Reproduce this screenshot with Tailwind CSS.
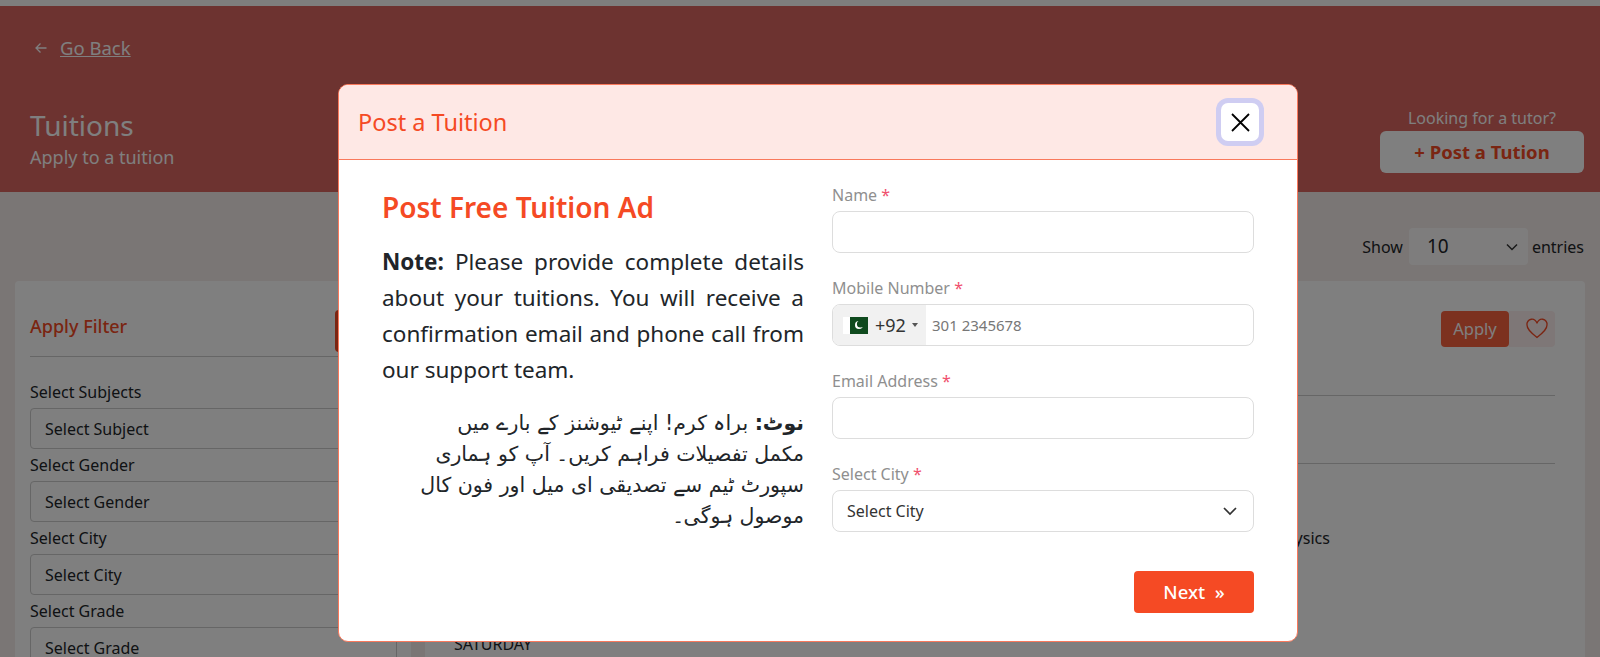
<!DOCTYPE html>
<html lang="en">
<head>
  <meta charset="UTF-8" />
  <title>Tuitions</title>
  <script src="https://cdn.jsdelivr.net/npm/@tailwindcss/browser@4"></script>
</head>
<body class="h-[657px] overflow-hidden bg-[#f5ecea] font-['Noto_Sans',sans-serif] text-[#212529]">
  <!-- page behind the modal -->
  <div class="h-[657px] overflow-hidden">
    <div class="h-[6px] bg-[#fdfcfa]"></div>
    <header class="relative h-[186px] bg-[#da6660] px-[30px] text-white">
      <div class="flex items-center gap-[13px] pt-[30px] text-[18.5px] leading-[24px]">
        <svg class="ml-[5px] h-[12px] w-[12px]" viewBox="0 0 12 12" fill="none" stroke="#fff" stroke-width="1.3"><path d="M11.5 6H1M5.5 1.5L1 6l4.5 4.5"/></svg>
        <a class="underline">Go Back</a>
      </div>
      <h1 class="mt-[47px] text-[28px] leading-[36px]">Tuitions</h1>
      <p class="mt-[2px] text-[18px] leading-[24px]">Apply to a tuition</p>
      <div class="absolute right-[16px] top-[100px] w-[204px] text-center">
        <p class="text-[16px] leading-[24px]">Looking for a tutor?</p>
        <button class="mt-[1px] h-[42px] w-full rounded-md bg-white text-[18.5px] font-bold text-[#f54a24]">+ Post a Tution</button>
      </div>
    </header>
    <div class="flex h-[89px] items-center justify-end gap-[4px] pt-[20px] pr-[16px] text-[16px]">
      <span class="mr-[2px]">Show</span>
      <div class="flex h-[37px] w-[119px] items-center justify-between rounded bg-[#fcfbfb] pl-[18px] pr-2 text-[19px]">
        10
        <svg class="h-4 w-4" viewBox="0 0 16 16" fill="none" stroke="#333" stroke-width="1.5"><path d="M3 5.5l5 5 5-5"/></svg>
      </div>
      <span>entries</span>
    </div>
    <div class="flex gap-[14px] px-[15px]">
      <aside class="w-[396px] shrink-0 rounded-t bg-white pl-[15px] pr-[14px]">
        <div class="flex h-[76px] items-end justify-between border-b border-[#ccc] pb-[4px]">
          <h3 class="mb-[14px] text-[18px] font-medium leading-[24px] text-[#f54a24]">Apply Filter</h3>
          <span class="h-[42px] w-[62px] rounded bg-[#f54a24]"></span>
        </div>
        <div class="pt-[24px] text-[16px]">
          <label class="block leading-[22px]">Select Subjects</label>
          <div class="mt-[5px] flex h-[41px] items-center rounded border border-[#ccc] px-[14px]">Select Subject</div>
          <label class="mt-[5px] block leading-[22px]">Select Gender</label>
          <div class="mt-[5px] flex h-[41px] items-center rounded border border-[#ccc] px-[14px]">Select Gender</div>
          <label class="mt-[5px] block leading-[22px]">Select City</label>
          <div class="mt-[5px] flex h-[41px] items-center rounded border border-[#ccc] px-[14px]">Select City</div>
          <label class="mt-[5px] block leading-[22px]">Select Grade</label>
          <div class="mt-[5px] flex h-[41px] items-center rounded border border-[#ccc] px-[14px]">Select Grade</div>
        </div>
      </aside>
      <main class="flex-1 rounded-t bg-white pl-[29px] pr-[30px]">
        <div class="flex h-[115px] items-start justify-end border-b border-[#ccc] pt-[30px]">
          <button class="h-[36px] w-[68px] rounded bg-[#f9623e] text-[16.5px] text-white">Apply</button>
          <span class="flex h-[36px] w-[46px] items-center justify-center rounded-r bg-[#fdeeee] pl-[9px]">
            <svg class="h-[24px] w-[24px]" viewBox="0 0 24 24" fill="none" stroke="#f54a24" stroke-width="1.3"><path d="M12 20.5C5 15 2 12 2 8a5 5 0 0 1 10-1.5A5 5 0 0 1 22 8c0 4-3 7-10 12.5z"/></svg>
          </span>
        </div>
        <div class="mt-[67px] border-t border-[#ccc]"></div>
        <p class="ml-[821px] mt-[62px] text-[16px] leading-[24px]">Physics</p>
        <p class="mt-[82px] text-[16px] leading-[24px]">SATURDAY</p>
      </main>
    </div>
  </div>

  <!-- overlay -->
  <div class="absolute inset-0 bg-black/50"></div>

  <!-- modal -->
  <div class="absolute left-[338px] top-[84px] flex h-[558px] w-[960px] flex-col overflow-hidden rounded-[10px] border border-[#f9795c] bg-white">
    <div class="flex h-[75px] shrink-0 items-center justify-between border-b border-[#f9795c] bg-[#fee8e5] pl-[19px] pr-[38px]">
      <h2 class="pt-[2px] text-[23.5px] text-[#f54a24]">Post a Tuition</h2>
      <button class="flex h-[38px] w-[38px] items-center justify-center rounded-[7px] bg-white ring-[5px] ring-[#cfcdf2]">
        <svg class="h-[19px] w-[19px]" viewBox="0 0 19 19" fill="none" stroke="#000" stroke-width="1.8"><path d="M1 1l17 17M18 1L1 18"/></svg>
      </button>
    </div>
    <div class="flex flex-1 pl-[43px] pr-[43px]">
      <div class="w-[422px] shrink-0 pt-[29px]">
        <h3 class="text-[28px] font-semibold leading-[36px] text-[#f54a24]">Post Free Tuition Ad</h3>
        <p class="mt-[19px] text-justify text-[22.5px] leading-[36px] text-[#212529]"><b>Note:</b> Please provide complete details about your tuitions. You will receive a confirmation email and phone call from our support team.</p>
        <p dir="rtl" class="mt-[20px] pl-[30px] text-[20.5px] leading-[31px] text-[#212529] font-['DejaVu_Sans',sans-serif]"><b>نوٹ:</b> براہ کرم! اپنے ٹیوشنز کے بارے میں مکمل تفصیلات فراہم کریں۔ آپ کو ہماری سپورٹ ٹیم سے تصدیقی ای میل اور فون کال موصول ہوگی۔</p>
      </div>
      <div class="ml-[28px] flex-1 pt-[23px] text-[16px]">
        <label class="block leading-[24px] text-[#8f8f8f]">Name <span class="text-[#f0506e]">*</span></label>
        <div class="mt-[4px] h-[42px] rounded-lg border border-[#ddd]"></div>
        <label class="mt-[23px] block leading-[24px] text-[#8f8f8f]">Mobile Number <span class="text-[#f0506e]">*</span></label>
        <div class="mt-[4px] flex h-[42px] items-center overflow-hidden rounded-lg border border-[#ddd]">
          <div class="flex h-full w-[93px] items-center bg-[#f1f1f1] pl-[10px]">
            <svg class="h-[17px] w-[25px]" viewBox="0 0 25 17"><rect width="25" height="17" fill="#fff"/><rect x="7" width="18" height="17" fill="#0f4a1e"/><circle cx="16" cy="8" r="4" fill="#fff"/><circle cx="17.5" cy="7" r="3.6" fill="#0f4a1e"/></svg>
            <span class="ml-[7px] text-[18px] text-[#333]">+92</span>
            <span class="ml-[6px] h-0 w-0 border-x-[3px] border-t-[4px] border-x-transparent border-t-[#555]"></span>
          </div>
          <span class="ml-[6px] text-[15px] text-[#777]">301 2345678</span>
        </div>
        <label class="mt-[23px] block leading-[24px] text-[#8f8f8f]">Email Address <span class="text-[#f0506e]">*</span></label>
        <div class="mt-[4px] h-[42px] rounded-lg border border-[#ddd]"></div>
        <label class="mt-[23px] block leading-[24px] text-[#8f8f8f]">Select City <span class="text-[#f0506e]">*</span></label>
        <div class="mt-[4px] flex h-[42px] items-center justify-between rounded-lg border border-[#ddd] pl-[14px] pr-[16px] text-[#333]">
          Select City
          <svg class="h-[14px] w-[14px]" viewBox="0 0 14 14" fill="none" stroke="#333" stroke-width="1.7"><path d="M1 4l6 6 6-6"/></svg>
        </div>
        <div class="mt-[39px] flex justify-end">
          <button class="h-[42px] w-[120px] rounded bg-[#f54a24] text-[18.5px] font-medium text-white">Next &nbsp;»</button>
        </div>
      </div>
    </div>
  </div>
</body>
</html>
